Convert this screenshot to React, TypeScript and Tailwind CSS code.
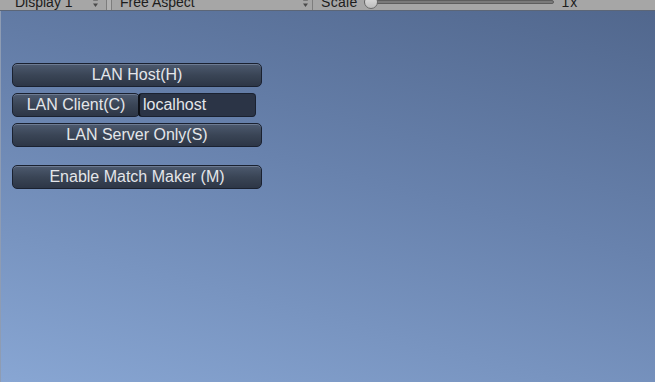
import { ReactNode } from 'react';

const font = { fontFamily: '"Liberation Sans", Arial, sans-serif' };

function UpDown() {
  return (
    <svg width="7" height="12" viewBox="0 0 7 12" className="shrink-0">
      <path d="M3.5 1 L6 4.5 L1 4.5 Z" fill="#4a4a4a" />
      <path d="M3.5 11 L6 7.5 L1 7.5 Z" fill="#4a4a4a" />
    </svg>
  );
}

function Toolbar() {
  return (
    <div className="h-[11px] overflow-hidden bg-[#a6a6a6] border-b border-[#5c6677]">
      <div className="-mt-[7px] flex h-[18px] items-center text-[14px] leading-4 text-[#1c1c1c]">
        <div className="flex h-full w-[107px] items-center justify-between border-r border-[#7d7d7d] pl-[15px] pr-[7px]">
          <span>Display 1</span>
          <UpDown />
        </div>
        <div className="h-full w-[5px] border-r border-[#7d7d7d] bg-[#b2b2b2]" />
        <div className="flex h-full w-[201px] items-center justify-between border-r border-[#7d7d7d] pl-[8px] pr-[3px]">
          <span>Free Aspect</span>
          <UpDown />
        </div>
        <div className="flex h-full items-center pl-[8px]">
          <span className="tracking-[0.3px]">Scale</span>
          <div className="relative ml-[6px] flex h-full w-[190px] items-center">
            <div className="h-[4px] w-full rounded-full border border-[#5e5e5e] bg-[#7a7a7a]" />
            <div className="absolute left-0 top-[2px] h-[14px] w-[14px] rounded-full border border-[#6a6a6a] bg-gradient-to-b from-[#e2e2e2] to-[#bdbdbd]" />
          </div>
          <span className="ml-[8px] tracking-[1px]">1x</span>
        </div>
      </div>
    </div>
  );
}

function GuiButton({ children, className = '' }: { children: ReactNode; className?: string }) {
  return (
    <div
      className={`flex h-[24px] items-center justify-center rounded-[5px] border border-[#1a2130] bg-gradient-to-b from-[#4d5a6f] via-[#3a4556] to-[#2d3646] text-[16px] leading-none text-[#e4e6ea] shadow-[inset_0_1px_0_rgba(150,165,190,0.45)] ${className}`}
    >
      {children}
    </div>
  );
}

export default function App() {
  return (
    <div className="flex h-[382px] w-[655px] flex-col overflow-hidden" style={font}>
      <Toolbar />
      <div className="flex-1 border-l border-[#8e9cb3] bg-[linear-gradient(195deg,#51678d_0%,#6882ad_45%,#88a6d3_100%)] pl-[11px] pt-[52px]">
        <div className="flex w-[250px] flex-col gap-[6px]">
          <GuiButton>LAN Host(H)</GuiButton>
          <div className="flex h-[24px]">
            <GuiButton className="w-[128px] shrink-0">LAN Client(C)</GuiButton>
            <div className="-ml-[2px] flex h-[24px] w-[118px] items-center rounded-[4px] border border-[#1a2130] border-l-[2px] border-l-[#0e1118] bg-[#2b3446] pl-[3px] text-[16px] leading-none text-[#e4e6ea]">
              localhost
            </div>
          </div>
          <GuiButton>LAN Server Only(S)</GuiButton>
          <GuiButton className="mt-[12px]">Enable Match Maker (M)</GuiButton>
        </div>
      </div>
    </div>
  );
}
